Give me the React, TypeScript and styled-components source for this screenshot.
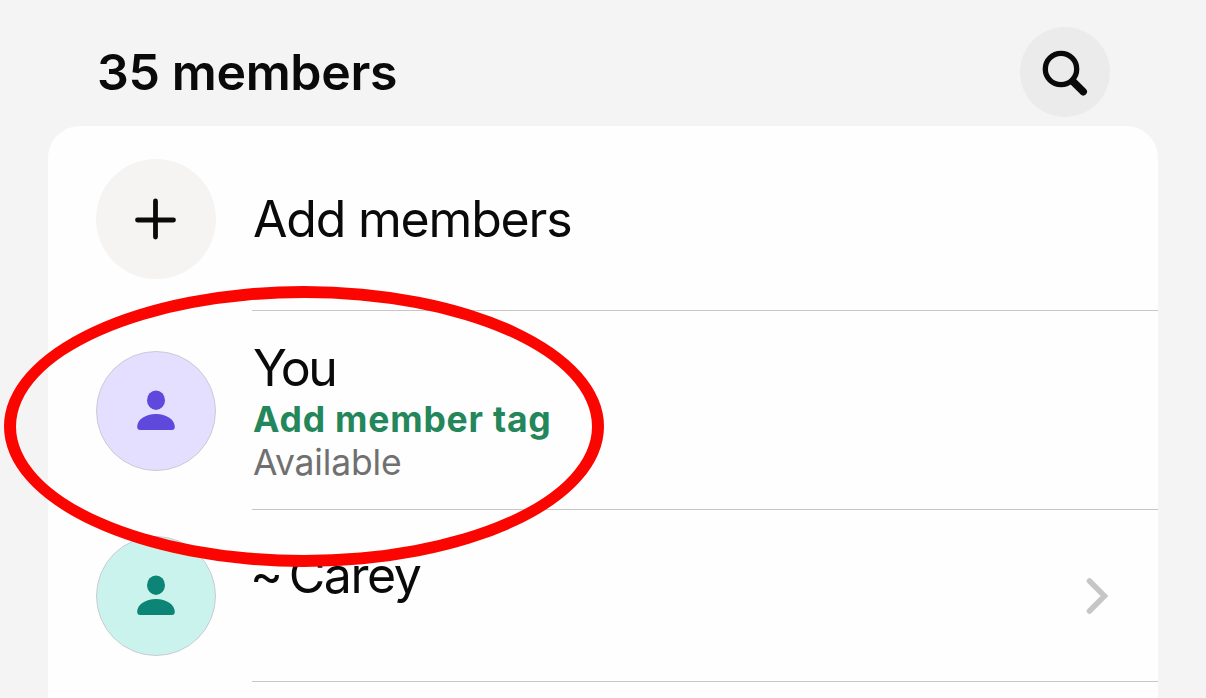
import styled, { createGlobalStyle } from 'styled-components';

const members = [
  { name: 'You', tag: 'Add member tag', status: 'Available', spacing: -2.4, bg: '#e4deff', color: '#5f48dc', height: 199 },
  { name: 'Carey', tilde: true, spacing: -1.4, bg: '#cbf3ed', color: '#0d8576', height: 172, arrow: true },
];

function PersonIcon() {
  return (
    <svg width="40" height="42" viewBox="0 0 40 42" fill="currentColor">
      <ellipse cx="20" cy="10.2" rx="9" ry="9.700" />
      <path d="M1.200 36.800C1.200 29.500 9.500 24 20 24s18.800 5.500 18.800 12.800c0 2.100-1 3.200-3 3.200H4.200c-2 0-3-1.100-3-3.200z" />
    </svg>
  );
}

function App() {
  return (
    <Screen>
      <GlobalStyle />
      <Header>
        <Title>35 members</Title>
        <SearchButton type="button" aria-label="Search">
          <svg width="50" height="50" viewBox="0 0 50 50" fill="none" stroke="#0a0a0a">
            <circle cx="21" cy="22" r="15.700" strokeWidth="5.300" />
            <path d="M33 34.500l10.200 10.200" strokeWidth="7.500" strokeLinecap="round" />
          </svg>
        </SearchButton>
      </Header>
      <Card>
        <Row height={185}>
          <Avatar bg="#f5f4f2" color="#0a0a0a">
            <svg width="42" height="42" viewBox="0 0 42 42" stroke="currentColor" strokeWidth="4.800" strokeLinecap="round">
              <path d="M20.500 3v36M2.500 22h36" />
            </svg>
          </Avatar>
          <Content>
            <Name spacing={-1.2}>Add members</Name>
          </Content>
        </Row>
        {members.map((member) => (
          <Row key={member.name} height={member.height}>
            <Avatar bg={member.bg} color={member.color} outlined>
              <PersonIcon />
            </Avatar>
            <Content>
              <Name spacing={member.spacing}>
                {member.tilde && <Tilde>~</Tilde>}
                {member.name}
              </Name>
              {member.tag ? <Tag>{member.tag}</Tag> : <EmptyLine />}
              {member.status && <Status>{member.status}</Status>}
              {member.arrow && (
                <Arrow>
                  <svg width="24" height="38" viewBox="0 0 24 38" fill="none" stroke="#c6c6c6" strokeWidth="5.500">
                    <path d="M3.500 4l15 15-15 15" strokeLinecap="round" />
                  </svg>
                </Arrow>
              )}
            </Content>
          </Row>
        ))}
      </Card>
      <Highlight />
    </Screen>
  );
}

const GlobalStyle = createGlobalStyle`
  * {
    box-sizing: border-box;
  }
  body {
    margin: 0;
    overflow: hidden;
    background-color: #f4f4f4;
    font-family: Inter, 'Liberation Sans', sans-serif;
    color: #0a0a0a;
  }
`;

const Screen = styled.div`
  position: relative;
  display: flex;
  flex-direction: column;
  width: 1206px;
  height: 698px;
  padding: 0 48px;
  overflow: hidden;
`;

const Header = styled.header`
  display: flex;
  align-items: center;
  justify-content: space-between;
  flex-shrink: 0;
  height: 126px;
  padding: 18px 48px 0 49px;
`;

const Title = styled.h1`
  margin: 0;
  font-size: 50px;
  line-height: 60px;
  font-weight: 600;
  letter-spacing: -0.35px;
`;

const SearchButton = styled.button`
  display: flex;
  align-items: center;
  justify-content: center;
  width: 90px;
  height: 90px;
  padding: 0;
  border: none;
  border-radius: 50%;
  background-color: #ebebeb;
`;

const Card = styled.section`
  flex: 1;
  border-radius: 32px 32px 0 0;
  background-color: #fefefe;
`;

const Row = styled.div<{ height: number }>`
  display: flex;
  align-items: center;
  gap: 36px;
  height: ${(props) => props.height}px;
  padding-left: 48px;
`;

const Avatar = styled.div<{ bg: string; color: string; outlined?: boolean }>`
  display: flex;
  align-items: center;
  justify-content: center;
  flex-shrink: 0;
  width: 120px;
  height: 120px;
  border: ${(props) => (props.outlined ? '1px solid #cbcbd6' : 'none')};
  border-radius: 50%;
  background-color: ${(props) => props.bg};
  color: ${(props) => props.color};
`;

const Content = styled.div`
  display: grid;
  grid-template-columns: 1fr auto;
  align-content: center;
  flex: 1;
  height: 100%;
  padding-top: 2px;
  border-bottom: 1px solid #c6c6c6;
`;

const Name = styled.div<{ spacing: number }>`
  grid-column: 1;
  padding-left: 1px;
  font-size: 50px;
  line-height: 60px;
  letter-spacing: ${(props) => props.spacing}px;
`;

const Tilde = styled.span`
  margin: 0 7px 0 -3px;
`;

const Tag = styled.div`
  grid-column: 1;
  padding-left: 1px;
  font-size: 35.5px;
  line-height: 43px;
  font-weight: 700;
  letter-spacing: 0.8px;
  color: #24865b;
`;

const Status = styled.div`
  grid-column: 1;
  padding-left: 1px;
  font-size: 35.5px;
  line-height: 43px;
  letter-spacing: -0.15px;
  color: #707070;
`;

const EmptyLine = styled.div`
  grid-column: 1;
  height: 43px;
`;

const Arrow = styled.div`
  display: flex;
  align-items: center;
  grid-column: 2;
  grid-row: 1 / 3;
  margin: -2px 48px 0 0;
`;

const Highlight = styled.div`
  position: absolute;
  top: 286px;
  left: 4px;
  width: 600px;
  height: 281px;
  border: 12px solid #fb0500;
  border-radius: 50%;
  pointer-events: none;
`;

export default App;
